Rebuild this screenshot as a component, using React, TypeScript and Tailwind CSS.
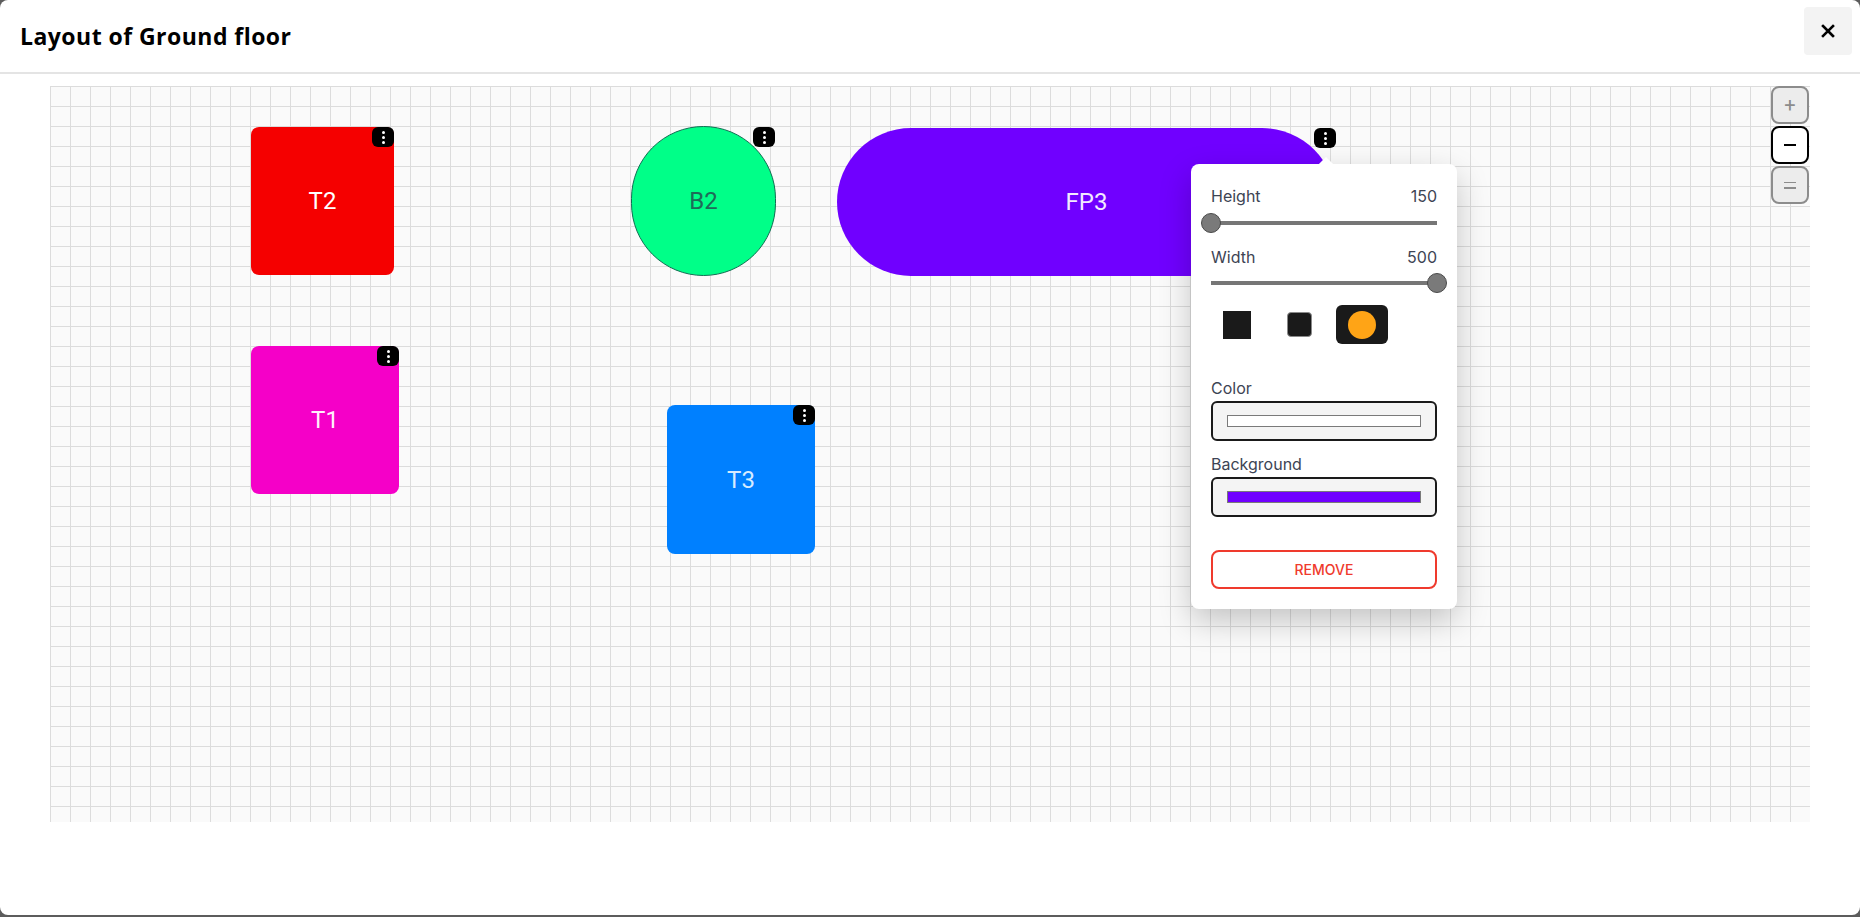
import React from 'react';

type Shape = {
    id: string;
    label: string;
    left: number;
    top: number;
    w: number;
    h: number;
    cls: string;
    text: string;
};

const shapes: Shape[] = [
    { id: 't2', label: 'T2', left: 201, top: 41, w: 143, h: 148, cls: 'bg-[#f50000] rounded-[8px]', text: 'text-white' },
    { id: 'b2', label: 'B2', left: 581, top: 40, w: 145, h: 150, cls: 'bg-[#00ff88] rounded-full border border-[#0f6e52]', text: 'text-[#1f6b58]' },
    { id: 'fp3', label: 'FP3', left: 787, top: 42, w: 499, h: 148, cls: 'bg-[#7000ff] rounded-full', text: 'text-[#f2eaff]' },
    { id: 't1', label: 'T1', left: 201, top: 260, w: 148, h: 148, cls: 'bg-[#f500c8] rounded-[8px]', text: 'text-[#fff0fb]' },
    { id: 't3', label: 'T3', left: 617, top: 319, w: 148, h: 149, cls: 'bg-[#0080ff] rounded-[8px]', text: 'text-[#d6ebff]' },
];

function Kebab() {
    return (
        <button className="absolute top-0 right-0 w-[22px] h-[20px] rounded-[6px] bg-black flex flex-col items-center justify-center gap-[2px]">
            <span className="w-[3px] h-[3px] rounded-full bg-white" />
            <span className="w-[3px] h-[3px] rounded-full bg-white" />
            <span className="w-[3px] h-[3px] rounded-full bg-white" />
        </button>
    );
}

function Slider({ pos }: { pos: 'start' | 'end' }) {
    return (
        <div className="relative h-[20px] flex items-center">
            <div className="w-full h-[4px] bg-[#767676]" />
            <div
                className={
                    pos === 'start'
                        ? 'absolute left-[-10px] top-0 w-[20px] h-[20px] rounded-full bg-[#7a7a7a] border border-[#4a4a4a]'
                        : 'absolute right-[-10px] top-0 w-[20px] h-[20px] rounded-full bg-[#7a7a7a] border border-[#4a4a4a]'
                }
            />
        </div>
    );
}

function SettingsPopover() {
    return (
        <div
            className="absolute left-[1141px] top-[78px] w-[266px] bg-white rounded-[8px] shadow-[0_12px_32px_rgba(0,0,0,0.22)] px-[20px] pt-[20px] pb-[20px] text-[#3d4454] z-20"
            style={{ fontFamily: 'Inter, "Noto Sans", sans-serif' }}
        >
            {/* little pointer towards the kebab */}
            <div className="absolute top-[-5px] left-[130px] w-[10px] h-[10px] bg-white rotate-45" />

            <div className="flex justify-between items-center h-[24px] text-[16px]">
                <span>Height</span>
                <span>150</span>
            </div>
            <div className="mt-[5px]">
                <Slider pos="start" />
            </div>

            <div className="flex justify-between items-center h-[24px] text-[16px] mt-[12px]">
                <span>Width</span>
                <span>500</span>
            </div>
            <div className="mt-[4px]">
                <Slider pos="end" />
            </div>

            {/* shape picker */}
            <div className="flex gap-[10.5px] mt-[12px]">
                <button className="w-[52px] h-[39px] flex items-center justify-center">
                    <span className="w-[28px] h-[28px] bg-[#1a1a1a]" />
                </button>
                <button className="w-[52px] h-[39px] flex items-center justify-center">
                    <span className="w-[25px] h-[25px] rounded-[4px] bg-[#1a1a1a] border border-[#8a8a8a]" />
                </button>
                <button className="w-[52px] h-[39px] rounded-[6px] bg-[#1a1a1a] flex items-center justify-center">
                    <span className="w-[28px] h-[28px] rounded-full bg-[#ffa416]" />
                </button>
            </div>

            <div className="mt-[32px] h-[24px] flex items-center text-[16px]">Color</div>
            <div className="mt-[1px] h-[40px] rounded-[6px] border-2 border-[#1a1a1a] bg-[#f4f4f4] flex items-center px-[14px]">
                <div className="w-full h-[12px] bg-white border border-[#7a7a7a]" />
            </div>

            <div className="mt-[11px] h-[24px] flex items-center text-[16px]">Background</div>
            <div className="mt-[1px] h-[40px] rounded-[6px] border-2 border-[#1a1a1a] bg-[#f4f4f4] flex items-center px-[14px]">
                <div className="w-full h-[12px] bg-[#7000ff] border border-[#7a7a7a]" />
            </div>

            <button className="mt-[33px] w-full h-[39px] rounded-[8px] border-2 border-[#ef3a2d] text-[#ef3a2d] text-[14px] font-medium">
                REMOVE
            </button>
        </div>
    );
}

function ZoomControls() {
    return (
        <div className="absolute left-[1721px] top-0 flex flex-col gap-[2px] z-10">
            <button className="w-[38px] h-[38px] rounded-[8px] border-2 border-[#8c8c8c] bg-[#ececec] text-[#8c8c8c] text-[20px] leading-none flex items-center justify-center">
                +
            </button>
            <button className="w-[38px] h-[38px] rounded-[8px] border-2 border-black bg-white flex items-center justify-center">
                <span className="w-[12px] h-[2.5px] bg-black" />
            </button>
            <button className="w-[38px] h-[38px] rounded-[8px] border-2 border-[#8c8c8c] bg-[#ececec] flex flex-col items-center justify-center gap-[4px]">
                <span className="w-[12px] h-[1.5px] bg-[#8c8c8c]" />
                <span className="w-[12px] h-[1.5px] bg-[#8c8c8c]" />
            </button>
        </div>
    );
}

export default function App() {
    return (
        <div className="w-[1860px] h-[917px] bg-[#5c5c5c] overflow-hidden">
            <div className="w-full h-[915px] bg-white rounded-[8px] flex flex-col">
                {/* Header */}
                <div className="h-[74px] shrink-0 border-b-2 border-[#e4e4e4] flex items-center justify-between pl-[20px] pr-[8px]">
                    <h1
                        className="text-[23px] font-bold text-black tracking-[0.02em]"
                        style={{ fontFamily: '"Open Sans", Lato, sans-serif' }}
                    >
                        Layout of Ground floor
                    </h1>
                    <button className="w-[48px] h-[48px] mb-[10px] rounded-[4px] bg-[#f3f3f3] flex items-center justify-center">
                        <svg width="14" height="14" viewBox="0 0 14 14" fill="none" stroke="black" strokeWidth="2.6" strokeLinecap="square">
                            <path d="M2 2l10 10M12 2L2 12" />
                        </svg>
                    </button>
                </div>

                {/* Canvas */}
                <div
                    className="relative mt-[12px] mx-[50px] h-[736px] bg-[#fafafa] [background-image:linear-gradient(to_right,#dcdcdc_1px,transparent_1px),linear-gradient(to_bottom,#dcdcdc_1px,transparent_1px)] [background-size:20px_20px]"
                    style={{ fontFamily: 'Roboto, "Noto Sans", sans-serif' }}
                >
                    {shapes.map((s) => (
                        <div
                            key={s.id}
                            className={`absolute flex items-center justify-center ${s.cls}`}
                            style={{ left: s.left, top: s.top, width: s.w, height: s.h }}
                        >
                            <span className={`text-[24px] ${s.text}`}>{s.label}</span>
                            <Kebab />
                        </div>
                    ))}

                    <ZoomControls />
                    <SettingsPopover />
                </div>
            </div>
        </div>
    );
}
